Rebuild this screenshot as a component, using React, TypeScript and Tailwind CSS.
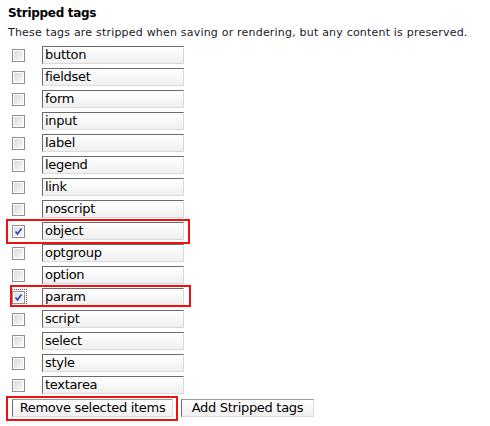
import React from "react";

const tags = [
  "button",
  "fieldset",
  "form",
  "input",
  "label",
  "legend",
  "link",
  "noscript",
  "object",
  "optgroup",
  "option",
  "param",
  "script",
  "select",
  "style",
  "textarea",
];

const checked: Record<string, boolean> = { object: true, param: true };

function Box({ on, focus }: { on?: boolean; focus?: boolean }) {
  return (
    <div className={"w-[13px] h-[13px] " + (focus ? "outline outline-1 outline-dotted outline-[#555] outline-offset-[1px]" : "")}>
      <div className="w-[13px] h-[13px] border border-[#8f8f8f] bg-white p-[1px]">
        <div className="w-full h-full bg-gradient-to-br from-[#dcdcdc] to-[#f8f8f8] relative">
          {on && (
            <svg viewBox="0 0 9 9" className="absolute inset-0 w-full h-full">
              <path d="M1.5 4.5 L3.5 7 L7.5 1.5" stroke="#2a43b8" strokeWidth="1.6" fill="none" />
            </svg>
          )}
        </div>
      </div>
    </div>
  );
}

export default function App() {
  return (
    <div className="bg-white w-[490px] h-[426px] pl-[8px] pt-[5px] text-black" style={{ fontFamily: '"DejaVu Sans", Verdana, sans-serif' }}>
      <div className="text-[12px] font-bold leading-[16px] tracking-[-0.3px]">Stripped tags</div>
      <div className="text-[11px] leading-[14px] mt-[5px] text-[#1a1a2a] tracking-[0.2px]">
        These tags are stripped when saving or rendering, but any content is preserved.
      </div>
      <div className="mt-[4px] flex flex-col">
        {tags.map((t) => (
          <div key={t} className="relative h-[22px] flex items-center">
            <div className="ml-[4px] mt-[1px]">
              <Box on={checked[t]} focus={t === "param"} />
            </div>
            <div className="ml-[17px] w-[142px] h-[18px] border border-t-[#6a6a6a] border-l-[#6a6a6a] border-r-[#dadada] border-b-[#dadada] bg-gradient-to-b from-white to-[#f0f0f0] text-[13px] leading-[16px] pl-[2px] tracking-[-0.3px]">
              {t}
            </div>
            {t === "object" && (
              <div className="absolute left-[-2px] top-[-1px] w-[184px] h-[25px] border-2 border-[#f01010] pointer-events-none" />
            )}
            {t === "param" && (
              <div className="absolute left-[2px] top-[-1px] w-[181px] h-[22px] border-2 border-[#f01010] pointer-events-none" />
            )}
          </div>
        ))}
      </div>
      <div className="mt-[3px] flex items-start">
        <div className="relative">
          <div className="absolute left-[-2px] top-[-3px] w-[172px] h-[25px] border-2 border-[#f01010]" />
          <button className="block ml-[4px] w-[161px] h-[18px] border border-t-[#9a9a9a] border-l-[#6a6a6a] border-r-[#dadada] border-b-[#dadada] bg-gradient-to-b from-white to-[#f0f0f0] text-[13px] leading-[16px] tracking-[-0.3px]">
            Remove selected items
          </button>
        </div>
        <button className="block ml-[8px] w-[133px] h-[18px] border border-t-[#9a9a9a] border-l-[#6a6a6a] border-r-[#dadada] border-b-[#dadada] bg-gradient-to-b from-white to-[#f0f0f0] text-[13px] leading-[16px] tracking-[-0.3px]">
          Add Stripped tags
        </button>
      </div>
    </div>
  );
}
